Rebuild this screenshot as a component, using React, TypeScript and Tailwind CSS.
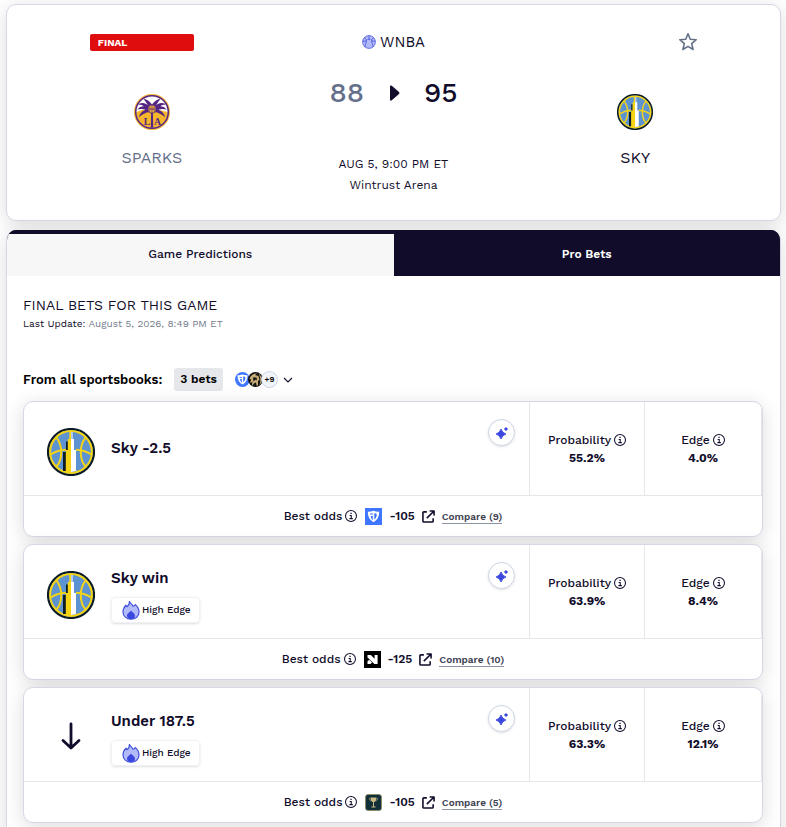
import { useState } from 'react';

function InfoIcon() {
  return (
    <svg viewBox="0 0 16 16" className="w-3 h-3 shrink-0" fill="none" stroke="#100c2a" aria-hidden="true">
      <circle cx="8" cy="8" r="7.3" strokeWidth="1.4" />
      <path d="M6.2 7.2H8.3V11.4M5.9 11.5H10.4" strokeWidth="1.4" />
      <path d="M7.2 4.6H8.9" strokeWidth="1.7" />
    </svg>
  );
}

function SkyLogo({ className }: { className: string }) {
  return (
    <svg viewBox="0 0 48 48" className={className} role="img" aria-label="Sky">
      <circle cx="24" cy="24" r="23" fill="#5d93d0" stroke="#0b1c26" strokeWidth="2.2" />
      <g fill="none" stroke="#f5d416" strokeWidth="2">
        <circle cx="24" cy="24" r="20.9" />
        <path d="M9.5 9.5Q14.5 16 14.2 25T9.5 38.5" />
        <path d="M38.5 9.5Q33.5 16 33.8 25T38.5 38.5" />
        <path d="M3.5 26.5Q11 22 19 21.8M29 21.8Q37 22 44.5 26.5" />
      </g>
      <path d="M22.3 4H24V12H22.3Z" fill="#f5d416" />
      <path d="M24 4H26V12H24Z" fill="#b5cdea" />
      <path d="M19 13.5H21V43H16V24H19Z" fill="#0b1c26" />
      <path d="M20.8 11H24V45H18.8V22H20.8Z" fill="#f5d416" />
      <path d="M24 11H27V22H29V43L24 44Z" fill="#ffffff" />
    </svg>
  );
}

function SparksLogo() {
  return (
    <svg viewBox="0 0 48 48" className="w-9 h-9" role="img" aria-label="Sparks">
      <circle cx="24" cy="24" r="24" fill="#f7b52c" />
      <circle cx="24" cy="24" r="21.5" fill="#ffffff" />
      <path d="M3 24Q14 19 24 20T45 24A21 21 0 0 1 3 24Z" fill="#f7b52c" />
      <circle cx="24" cy="24" r="21.7" fill="none" stroke="#552583" strokeWidth="2" />
      <g fill="#552583">
        <path d="M22 20L12.5 6Q20 8 24 14Q28 8 35.5 6L26 20Z" />
        <path d="M21 17Q13 9 5.5 14Q11 14 13.5 16.5Q8 16 4.5 20.5Q11 19 15.5 21Q8 24 6.5 31Q13 25 21 24Z" />
        <path d="M27 17Q35 9 42.5 14Q37 14 34.5 16.5Q40 16 43.5 20.5Q37 19 32.5 21Q40 24 41.5 31Q35 25 27 24Z" />
        <path d="M22.8 24H25.2L25.6 45H22.4Z" />
      </g>
      <circle cx="24" cy="20" r="5.4" fill="#f7b52c" stroke="#552583" strokeWidth="1.2" />
      <path d="M24 15V25M19 20H29M20.5 16.5Q23 20 20.5 23.5M27.5 16.5Q25 20 27.5 23.5" fill="none" stroke="#552583" strokeWidth="0.9" />
      <text x="17.3" y="41" textAnchor="middle" fontSize="13" fontWeight="700" fill="#552583" fontFamily="Liberation Serif, serif">L</text>
      <text x="31.4" y="41" textAnchor="middle" fontSize="13" fontWeight="700" fill="#552583" fontFamily="Liberation Serif, serif">A</text>
    </svg>
  );
}

function BasketballIcon() {
  return (
    <svg viewBox="0 0 16 16" className="w-3.5 h-3.5" fill="none" stroke="#4350dc" strokeWidth="0.9" aria-hidden="true">
      <circle cx="8" cy="8" r="7.3" fill="#b3bafa" />
      <path d="M3 3Q6 5.5 4.8 8.5T3.5 13.5M13 3Q10 5.5 11.2 8.5T12.5 13.5M6.2 5H9.8M8 1V5M1 7H5M11 7H15" />
    </svg>
  );
}

function FlameIcon() {
  return (
    <svg viewBox="0 0 18 20" className="w-[18px] h-5 shrink-0" aria-hidden="true">
      <path d="M7.5 1C7.8 3.5 10.5 4 11 6.2C12.2 6 12.8 5.3 13.4 4.6C15.6 6.5 17 9 17 12C17 16.3 13.5 19.2 9 19.2S1 16.2 1 12C1 9 2.4 6.8 4 5.3L5 6.7C6.7 5.4 7.7 3.3 7.5 1Z" fill="#b3bafa" stroke="#4350dc" strokeWidth="1.2" />
      <path d="M9 10.5C10.2 12.5 13 13.2 13 15.8C13 18 11.3 19.2 9 19.2S5 18 5 15.8C5 13.2 7.8 12.5 9 10.5Z" fill="#3b48df" />
    </svg>
  );
}

function FanduelMark({ className }: { className: string }) {
  return (
    <svg viewBox="0 0 17 17" className={className} aria-hidden="true">
      <path d="M0 0H17V17H0Z" fill="#3f76ff" />
      <path d="M2.8 3.6Q5.5 3.8 8.5 2.7Q11.5 3.8 14.2 3.6Q14.4 11 8.5 14.3Q2.6 11 2.8 3.6Z" fill="#ffffff" />
      <path d="M5.6 8H7.8V12.4Q5.8 10.6 5.6 8ZM9.3 5.2H10.5Q12 5.4 11.8 7.6Q11.3 10.2 9.3 11.6ZM5 5.6H8.2V6.5H5Z" fill="#3f76ff" />
    </svg>
  );
}

function NovigMark({ className }: { className: string }) {
  return (
    <svg viewBox="0 0 17 17" className={className} aria-hidden="true">
      <path d="M0 0H17V17H0Z" fill="#000000" />
      <path d="M3.5 4H6.8L10.6 7.8V4H13.6V13H10.4L3.5 6.4Z" fill="#ffffff" />
      <path d="M5.2 8.8L8 11.5L6.5 13H3.5V10.2Z" fill="#ffffff" />
    </svg>
  );
}

function TrophyMark({ className }: { className: string }) {
  return (
    <svg viewBox="0 0 17 17" className={className} aria-hidden="true">
      <rect x="0.5" y="0.5" width="16" height="16" rx="2.5" fill="#12303a" stroke="#8b8a5c" strokeWidth="0.8" />
      <path d="M5.5 3.5H11.5Q11.5 8 8.5 8.2Q5.5 8 5.5 3.5ZM8 8H9V12.4H8ZM6.4 12.4H10.6V13.4H6.4Z" fill="#cdbb86" />
      <path d="M5.5 4.5H4.2Q4.3 6.5 6 7M11.5 4.5H12.8Q12.7 6.5 11 7" fill="none" stroke="#a89a6a" strokeWidth="0.6" />
    </svg>
  );
}

function LionMark() {
  return (
    <svg viewBox="0 0 15 15" className="w-[15px] h-[15px] rounded-full" aria-hidden="true">
      <path d="M0 0H15V15H0Z" fill="#111111" />
      <path d="M2.5 4.5Q5 1 9 1.5L7 3L10.5 4L11.5 8L10 9V13.5H8.5L8 10.5L6.5 11L4 14L4.3 10L2 11L3.2 7.5L1.5 7Z" fill="#c6ad78" />
      <path d="M10.5 1.5Q13.5 3.5 13.5 7.5Q13.5 11 11.3 13.5Q12.7 10 12.3 7Q12 4 10.5 1.5Z" fill="#c6ad78" />
      <path d="M5 5.5H8.5L9 8.5L7.5 7.5L5.5 9.5Z" fill="#111111" />
    </svg>
  );
}

function ExternalIcon() {
  return (
    <svg viewBox="0 0 14 14" className="w-[13px] h-[13px]" fill="none" stroke="#100c2a" strokeWidth="1.7" strokeLinejoin="round" aria-hidden="true">
      <path d="M5.2 2H2Q1 2 1 3V12Q1 13 2 13H11Q12 13 12 12V9M8.2 1H13V5.8M12.7 1.3L5.2 8.8" />
    </svg>
  );
}

function SparkleIcon() {
  return (
    <svg viewBox="0 0 14 14" className="w-3.5 h-3.5" fill="#3b48df" aria-hidden="true">
      <path d="M6 3Q7.2 7 11 8Q7.2 9 6 13Q4.8 9 1 8Q4.8 7 6 3Z" stroke="#3b48df" strokeWidth="0.9" />
      <path d="M11 0.7L11.9 2.1L13.3 3L11.9 3.9L11 5.3L10.1 3.9L8.7 3L10.1 2.1Z" />
    </svg>
  );
}

const BETS = [
  { title: 'Sky -2.5', icon: 'sky', highEdge: false, prob: '55.2%', edge: '4.0%', odds: '-105', count: 9, Book: FanduelMark },
  { title: 'Sky win', icon: 'sky', highEdge: true, prob: '63.9%', edge: '8.4%', odds: '-125', count: 10, Book: NovigMark },
  { title: 'Under 187.5', icon: 'under', highEdge: true, prob: '63.3%', edge: '12.1%', odds: '-105', count: 5, Book: TrophyMark },
];

function Stat({ label, value, className }: { label: string; value: string; className: string }) {
  return (
    <div className={`flex flex-col items-center justify-center border-r border-[#e5e7eb] leading-[18px] ${className}`}>
      <div className="flex items-center gap-[3px] font-medium">
        {label}
        <InfoIcon />
      </div>
      <div className="font-bold">{value}</div>
    </div>
  );
}

function BetCard({ bet }: { bet: (typeof BETS)[number] }) {
  const { Book } = bet;
  return (
    <article className="overflow-hidden rounded-[10px] border border-[#d5d8e6] bg-white text-xs shadow-[0_4px_20px_rgba(0,0,0,0.14)]">
      <div className="flex h-[94px] border-b border-[#e5e7eb]">
        <div className="flex flex-1 items-center border-r border-[#e5e7eb] pr-3.5 pl-[23px]">
          <div className="flex w-12 shrink-0 justify-center">
            {bet.icon === 'sky' ? (
              <SkyLogo className="mt-1.5 w-12 h-12" />
            ) : (
              <svg viewBox="0 0 24 30" className="mt-0.5 w-6 h-[30px]" fill="none" stroke="#100c2a" strokeWidth="2.8" strokeLinecap="round" strokeLinejoin="round" role="img" aria-label="Under">
                <path d="M12 3V27M4 19.5L12 27L20 19.5" />
              </svg>
            )}
          </div>
          <div className={`ml-4 flex flex-1 flex-col items-start gap-[9px] ${bet.highEdge ? 'pt-2' : 'pb-0.5'}`}>
            <h3 className="text-[15px] leading-5 font-semibold">{bet.title}</h3>
            {bet.highEdge && (
              <div className="flex h-[26px] items-center gap-0.5 rounded-sm border border-[#f0f1f4] pr-2 pl-2.5 text-[10px] leading-4 font-medium shadow-sm">
                <FlameIcon />
                <span>High Edge</span>
              </div>
            )}
          </div>
          <button aria-label="Explain this bet" className="mt-[17px] flex h-[27px] w-[27px] shrink-0 items-center justify-center self-start rounded-full border border-[#cbd2e1] shadow-sm">
            <SparkleIcon />
          </button>
        </div>
        <Stat label="Probability" value={bet.prob} className="w-[115px]" />
        <Stat label="Edge" value={bet.edge} className="w-[117px]" />
      </div>
      <div className="flex h-10 items-center justify-center">
        <span className="mr-[3px] font-medium">Best odds</span>
        <InfoIcon />
        <Book className="ml-2 h-[17px] w-[17px]" />
        <span className="ml-[7px] font-semibold">{bet.odds}</span>
        <a href="#bet" aria-label="Open sportsbook" className="ml-[7px]">
          <ExternalIcon />
        </a>
        <a href="#compare" className="mt-0.5 ml-[7px] border-b border-[#8b93a5] text-[10px] leading-3 font-semibold text-[#3f4354]">
          Compare ({bet.count})
        </a>
      </div>
    </article>
  );
}

export default function App() {
  const [tab, setTab] = useState('pro');

  return (
    <div className="flex flex-col gap-[9px] overflow-hidden bg-white pt-1 pr-[5px] pl-1.5 font-['Work_Sans','Inter',sans-serif] text-[#100c2a]">
      {/* Scoreboard */}
      <section className="grid h-[217px] grid-cols-3 rounded-[10px] border border-[#d5d8e6] bg-white px-6 text-center shadow-[0_4px_20px_rgba(0,0,0,0.14)]">
        <div className="flex flex-col items-center pt-[29px]">
          <div className="mr-5 h-[17px] w-[104px] rounded-xs bg-[#df0d0d] pl-2 text-left text-[10px] leading-[17px] font-bold text-white">FINAL</div>
          <div className="mt-[43px]">
            <SparksLogo />
          </div>
          <div className="mt-4 text-base leading-6 text-[#64708a]">SPARKS</div>
        </div>

        <div className="flex flex-col items-center pt-[27px]">
          <div className="flex items-center gap-1 text-[15px] leading-5">
            <BasketballIcon />
            WNBA
          </div>
          <div className="mt-[23px] flex items-center text-[28px] leading-9">
            <span className="font-medium text-[#64708a]">88</span>
            <svg viewBox="0 0 10 16" className="mr-6 ml-[26px] h-4 w-2.5" fill="#100c2a" aria-label="Winner" role="img">
              <path d="M0 1.5Q0 0 1.5 0.5L9 7Q10 8 9 9L1.5 15.5Q0 16 0 14.5Z" />
            </svg>
            <span className="font-medium">95</span>
          </div>
          <div className="mt-[43px] text-xs leading-[21px]">
            <div>AUG 5, 9:00 PM ET</div>
            <div>Wintrust Arena</div>
          </div>
        </div>

        <div className="flex flex-col items-center pt-[27px]">
          <button aria-label="Follow game" className="ml-[105px]">
            <svg viewBox="0 0 20 20" className="h-5 w-5" fill="none" stroke="#64708a" strokeWidth="1.6" strokeLinejoin="round">
              <path d="M10 1.8L12.3 7.2L18.2 7.7L13.7 11.6L15.1 17.5L10 14.4L4.9 17.5L6.3 11.6L1.8 7.7L7.7 7.2Z" />
            </svg>
          </button>
          <SkyLogo className="mt-[42px] h-9 w-9" />
          <div className="mt-4 text-base leading-6">SKY</div>
        </div>
      </section>

      {/* Bets panel */}
      <section className="overflow-hidden rounded-t-[10px] border-x border-[#d5d8e6] bg-white shadow-[0_4px_20px_rgba(0,0,0,0.14)]">
        <div role="tablist" className="grid grid-cols-2 border-t-4 border-[#100c2a] bg-[#100c2a] text-xs">
          <button
            role="tab"
            aria-selected={tab === 'game'}
            onClick={() => setTab('game')}
            className="h-[42px] bg-[#f7f7f8] pb-0.5 font-medium"
          >
            Game Predictions
          </button>
          <button
            role="tab"
            aria-selected={tab === 'pro'}
            onClick={() => setTab('pro')}
            className="h-[42px] bg-[#100c2a] pb-0.5 font-semibold text-white"
          >
            Pro Bets
          </button>
        </div>

        <div className="pt-[19px] pr-[17px] pl-4">
          <h2 className="text-sm leading-5">FINAL BETS FOR THIS GAME</h2>
          <p className="mt-px text-[10px] leading-4">
            Last Update: <span className="text-[#737b8c]">August 5, 2026, 8:49 PM ET</span>
          </p>

          <div className="mt-9 flex items-center text-black">
            <h3 className="text-[13px] font-semibold">From all sportsbooks:</h3>
            <span className="ml-3 rounded-[3px] bg-[#e5e7eb] px-1.5 text-xs leading-[23px] font-semibold">3 bets</span>
            <button aria-label="Show sportsbooks" className="ml-3 flex items-center">
              <FanduelMark className="h-[15px] w-[15px] rounded-full" />
              <span className="-ml-0.5">
                <LionMark />
              </span>
              <span className="-ml-0.5 flex h-[17px] w-[17px] items-center justify-center rounded-full border border-[#cbd5e1] bg-[#f1f5f9] text-[8px] font-semibold">+9</span>
              <svg viewBox="0 0 10 10" className="ml-[5px] h-2.5 w-2.5" fill="none" stroke="#100c2a" strokeWidth="1.1">
                <path d="M1 3L5 7L9 3" />
              </svg>
            </button>
          </div>

          <div className="mt-2.5 flex flex-col gap-[7px] pb-4">
            {BETS.map(bet => (
              <BetCard key={bet.title} bet={bet} />
            ))}
          </div>
        </div>
      </section>
    </div>
  );
}
